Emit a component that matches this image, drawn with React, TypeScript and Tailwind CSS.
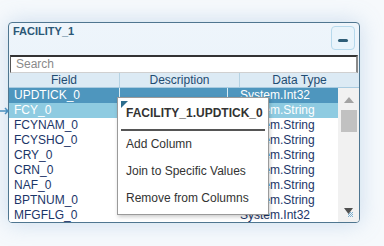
import React from "react";

const rows: [string, string][] = [
  ["UPDTICK_0", "System.Int32"],
  ["FCY_0", "System.String"],
  ["FCYNAM_0", "System.String"],
  ["FCYSHO_0", "System.String"],
  ["CRY_0", "System.String"],
  ["CRN_0", "System.String"],
  ["NAF_0", "System.String"],
  ["BPTNUM_0", "System.String"],
  ["MFGFLG_0", "System.Int32"],
];

export default function App() {
  return (
    <div
      className="relative w-[384px] h-[246px] overflow-hidden bg-[#f6f9fc] pt-[22px] pl-[8px]"
      style={{ fontFamily: '"Liberation Sans", Arial, sans-serif' }}
    >
      <div className="w-[352px] h-[201px] rounded-[4px] border border-[#4f7690] bg-gradient-to-b from-[#eef5fb] to-[#e3eff7] shadow-[0_0_22px_rgba(120,165,210,0.35)] overflow-hidden flex flex-col">
        {/* title bar */}
        <div className="h-[32px] flex items-start justify-between pl-[4px] pr-[4px]">
          <div className="text-[11px] font-bold text-[#2b5876] leading-[13px] pt-[2px]">FACILITY_1</div>
          <div className="mt-[3px] w-[24px] h-[24px] rounded-[4px] border border-[#b6d9ec] bg-[#e9f4fb] flex items-center justify-center">
            <div className="w-[10px] h-[3px] rounded-[2px] bg-[#2e5e78] mt-[4px]" />
          </div>
        </div>
        {/* search */}
        <div className="h-[18px] px-[1px]">
          <div className="h-[18px] bg-white border-t-2 border-l border-r-2 border-b border-t-[#333] border-l-[#555] border-r-[#8a8a8a] border-b-[#d0d0d0] pl-[5px] text-[12px] leading-[15px] text-[#8a8a8a]">
            Search
          </div>
        </div>
        {/* header */}
        <div className="h-[15px] grid grid-cols-[111px_120px_1fr] bg-[#dceaf4] border-b border-[#a9cbe0] text-[12px] leading-[14px] text-[#1f4c72]">
          <div className="text-center border-r border-[#b5d2e3]">Field</div>
          <div className="text-center border-r border-[#b5d2e3]">Description</div>
          <div className="text-center">Data Type</div>
        </div>
        {/* body */}
        <div className="flex flex-1 min-h-0">
          <div className="w-[329px] bg-white">
            {rows.map(([f, t], i) => {
              const bg =
                i === 0 ? "bg-[#4e96be] text-white" : i === 1 ? "bg-[#8ecbe1] text-white" : "bg-white text-[#1b3568]";
              return (
                <div key={f} className={`h-[15px] grid grid-cols-[111px_108px_1fr] text-[12px] leading-[15px] ${bg}`}>
                  <div className={`pl-[5px] ${i < 2 ? "border-r border-[#d8ecf5]" : ""}`}>{f}</div>
                  <div className={`${i < 2 ? "border-r border-[#d8ecf5]" : ""}`}></div>
                  <div className="pl-[12px] whitespace-nowrap">{t}</div>
                </div>
              );
            })}
          </div>
          <div className="flex-1 bg-[#f1f1f1] flex flex-col items-center relative">
            <svg width="10" height="6" viewBox="0 0 10 6" className="mt-[9px]">
              <polygon points="5,0 10,6 0,6" fill="#a3a3a3" />
            </svg>
            <div className="mt-[7px] w-[16px] h-[22px] bg-[#c1c1c1]" />
            <svg width="9" height="6" viewBox="0 0 9 6" className="absolute left-[6px] top-[120px]">
              <polygon points="0,0 9,0 4.5,6" fill="#505050" />
            </svg>
            <svg width="7" height="7" viewBox="0 0 7 7" className="absolute left-[9px] top-[123px]">
              <path d="M6 1 L1 6 M6 3 L3 6 M6 5 L5 6 M4 1 L1 4" stroke="#7aaed0" strokeWidth="1" />
            </svg>
          </div>
        </div>
      </div>

      {/* left arrow */}
      <svg width="9" height="8" viewBox="0 0 9 8" className="absolute left-0 top-[107px]">
        <path d="M0 4 H8 M5 1 L8 4 L5 7" stroke="#4a8fbf" strokeWidth="1.5" fill="none" />
      </svg>

      {/* context menu */}
      <div className="absolute left-[117px] top-[97px] w-[152px] h-[118px] bg-white border border-[#9a9a9a] shadow-[1px_2px_4px_rgba(0,0,0,0.2)] text-[#333]">
        <svg width="7" height="7" viewBox="0 0 7 7" className="absolute left-[3px] top-[3px]">
          <polygon points="0,0 7,0 0,7" fill="#2e6d8c" />
        </svg>
        <div className="pl-[8px] pt-[8px] h-[31px] text-[12px] font-bold leading-[15px]">FACILITY_1.UPDTICK_0</div>
        <div className="mx-[3px] h-[2px] bg-[#555]" />
        <div className="pl-[8px] text-[12px] leading-[27px] pt-[0px]">
          <div>Add Column</div>
          <div>Join to Specific Values</div>
          <div>Remove from Columns</div>
        </div>
      </div>
    </div>
  );
}
